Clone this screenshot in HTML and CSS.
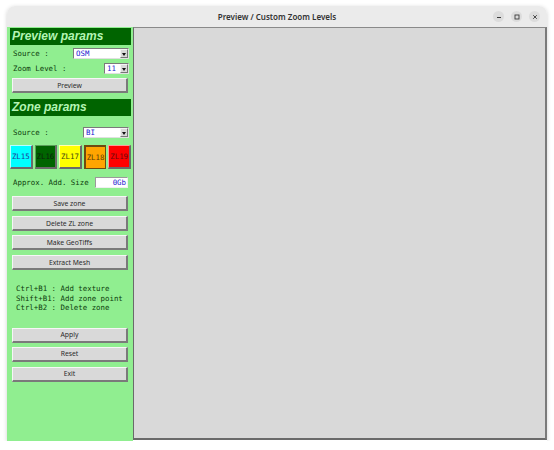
FILE: index.html
```html
<!DOCTYPE html>
<html>
<head>
<meta charset="utf-8">
<title>Preview / Custom Zoom Levels</title>
<link rel="stylesheet" href="styles.css">
</head>
<body>
<div class="window">
  <div class="titlebar">
    <span class="title">Preview / Custom Zoom Levels</span>
    <div class="controls">
      <span class="ctl">
        <svg width="10" height="10" viewBox="0 0 10 10"><path d="M3 5.5h4" stroke="#3a3a3a" stroke-width="1"/></svg>
      </span>
      <span class="ctl">
        <svg width="10" height="10" viewBox="0 0 10 10"><rect x="3" y="3" width="4" height="4" fill="none" stroke="#3a3a3a" stroke-width="0.9"/></svg>
      </span>
      <span class="ctl">
        <svg width="10" height="10" viewBox="0 0 10 10"><path d="M3.2 3.2l3.6 3.6M6.8 3.2l-3.6 3.6" stroke="#3a3a3a" stroke-width="0.9"/></svg>
      </span>
    </div>
  </div>
  <div class="body">
    <div class="panel">
      <div class="header h1">Preview params</div>
      <div class="row r-src1">
        <span class="lbl">Source :</span>
        <span class="combo c-src1"><span class="val">OSM</span><span class="arrow"></span></span>
      </div>
      <div class="row r-zl">
        <span class="lbl">Zoom Level :</span>
        <span class="combo c-zl"><span class="val">11</span><span class="arrow"></span></span>
      </div>
      <button class="btn b-preview">Preview</button>

      <div class="header h2">Zone params</div>
      <div class="row r-src2">
        <span class="lbl">Source :</span>
        <span class="combo c-src2"><span class="val">BI</span><span class="arrow"></span></span>
      </div>
      <div class="zls">
        <span class="zl zl15">ZL15</span>
        <span class="zl zl16">ZL16</span>
        <span class="zl zl17">ZL17</span>
        <span class="zl zl18">ZL18</span>
        <span class="zl zl19">ZL19</span>
      </div>
      <div class="row r-size">
        <span class="lbl">Approx. Add. Size</span>
        <span class="entry">0Gb</span>
      </div>
      <button class="btn b-save">Save zone</button>
      <button class="btn b-del">Delete ZL zone</button>
      <button class="btn b-geo">Make GeoTiffs</button>
      <button class="btn b-mesh">Extract Mesh</button>

      <div class="help">Ctrl+B1 : Add texture
Shift+B1: Add zone point
Ctrl+B2 : Delete zone</div>

      <button class="btn b-apply">Apply</button>
      <button class="btn b-reset">Reset</button>
      <button class="btn b-exit">Exit</button>
    </div>
    <div class="canvas"></div>
  </div>
</div>
</body>
</html>
```

FILE: styles.css
```css
html, body {
  margin: 0;
  padding: 0;
  background: #ffffff;
}

.window {
  margin: 6px 0 0 7px;
  width: 540px;
  height: 435px;
  display: flex;
  flex-direction: column;
  border-radius: 8px 8px 0 0;
  box-shadow: 0 1px 4px rgba(0, 0, 0, 0.18);
  overflow: hidden;
}

.titlebar {
  height: 21px;
  flex: none;
  background: #ebebeb;
  display: flex;
  align-items: center;
  justify-content: center;
  position: relative;
}

.title {
  font-family: "Noto Sans", sans-serif;
  font-weight: 600;
  font-size: 8px;
  color: #333333;
}

.controls {
  position: absolute;
  right: 7px;
  top: 5px;
  display: flex;
  gap: 7px;
}

.ctl {
  width: 11px;
  height: 11px;
  border-radius: 50%;
  background: #dcdcdc;
  display: flex;
  align-items: center;
  justify-content: center;
}

.ctl svg {
  display: block;
}

.body {
  flex: 1;
  display: flex;
  min-height: 0;
}

/* left control column */
.panel {
  width: 126px;
  flex: none;
  background: #90ee90;
  display: flex;
  flex-direction: column;
  padding-top: 1px;
}

.header {
  margin: 0 2px 0 3px;
  height: 17px;
  background: #006400;
  color: #b4f5b4;
  font-family: "Liberation Sans", sans-serif;
  font-weight: bold;
  font-style: italic;
  font-size: 12px;
  line-height: 17px;
  padding-left: 2px;
}

.h2 { margin-top: 6px; }

.row {
  height: 11px;
  display: flex;
  align-items: center;
  justify-content: space-between;
  padding: 0 4px 0 6px;
}

.r-src1 { margin-top: 3px; }
.r-zl { margin-top: 4px; }
.r-src2 { margin-top: 11px; }
.r-size { margin-top: 8px; padding-right: 5px; }

.lbl,
.help,
.val,
.entry,
.zl {
  font-family: "DejaVu Sans Mono", monospace;
  font-size: 7.4px;
}

.lbl {
  color: #0d3d0d;
}

.combo {
  height: 9px;
  background: #ffffff;
  border: 1px solid #7a7a7a;
  border-right-color: #e0e0e0;
  border-bottom-color: #e0e0e0;
  display: flex;
  align-items: center;
  justify-content: space-between;
}

.c-src1 { width: 54px; }
.c-zl { width: 23px; }
.c-src2 { width: 44px; }

.val {
  color: #1a1ad0;
  padding-left: 2px;
  line-height: 9px;
}

.arrow {
  width: 8px;
  height: 9px;
  background: #d9d9d9;
  border: 1px solid #f4f4f4;
  border-right-color: #777;
  border-bottom-color: #777;
  box-sizing: border-box;
  position: relative;
}

.arrow::after {
  content: "";
  position: absolute;
  left: 1px;
  top: 2.5px;
  border-left: 2.5px solid transparent;
  border-right: 2.5px solid transparent;
  border-top: 3px solid #111;
}

.btn {
  margin: 0 5px;
  height: 15px;
  padding: 0;
  background: #d9d9d9;
  border: 1px solid #f6f6f6;
  border-right: 2px solid #7a7a7a;
  border-bottom: 2px solid #7a7a7a;
  font-family: "Noto Sans", sans-serif;
  font-size: 6.8px;
  color: #2a2a2a;
  line-height: 11px;
}

.b-preview { margin-top: 4px; }
.b-save { margin-top: 8px; }
.b-del { margin-top: 5px; }
.b-geo { margin-top: 4px; }
.b-mesh { margin-top: 5px; }
.b-apply { margin-top: 15px; }
.b-reset { margin-top: 4px; }
.b-exit { margin-top: 5px; }

.zls {
  margin: 7px 2px 0 3px;
  height: 24px;
  display: flex;
  gap: 2px;
}

.zl {
  flex: 1;
  display: flex;
  align-items: center;
  justify-content: center;
  border: 1px solid #ffffff;
  border-right: 2px solid #6a6a6a;
  border-bottom: 2px solid #6a6a6a;
  color: #1a2a60;
}

.zl15 { background: #00ffff; border-top-color: #b8ffff; border-left-color: #b8ffff; color: #1d3c9a; }
.zl16 { background: #006400; border-top-color: #5aa05a; border-left-color: #5aa05a; color: #0c1f0c; }
.zl17 { background: #ffff00; border-top-color: #ffffb0; border-left-color: #ffffb0; color: #3f4a10; }
.zl18 { background: #ffa500; border: 1px solid #6e4a10; border-top: 2px solid #6e4a10; border-left: 2px solid #6e4a10; color: #5a3a08; }
.zl19 { background: #ff0000; border-top-color: #ff9a9a; border-left-color: #ff9a9a; color: #6a0a0a; }

.entry {
  width: 30px;
  height: 9px;
  line-height: 9px;
  background: #ffffff;
  border: 1px solid #9a9a9a;
  border-right-color: #f0f0f0;
  border-bottom-color: #f0f0f0;
  color: #1a1ad0;
  text-align: right;
  padding-right: 1px;
}

.help {
  margin: 14px 0 0 9px;
  white-space: pre;
  line-height: 9.5px;
  color: #0d3d0d;
}

/* drawing area */
.canvas {
  flex: 1;
  margin-bottom: 1px;
  background: #d9d9d9;
  border-left: 1px solid #6a6a6a;
  border-top: 1px solid #8a8a8a;
  border-right: 2px solid #7a7a7a;
  border-bottom: 2px solid #6a6a6a;
}
```
